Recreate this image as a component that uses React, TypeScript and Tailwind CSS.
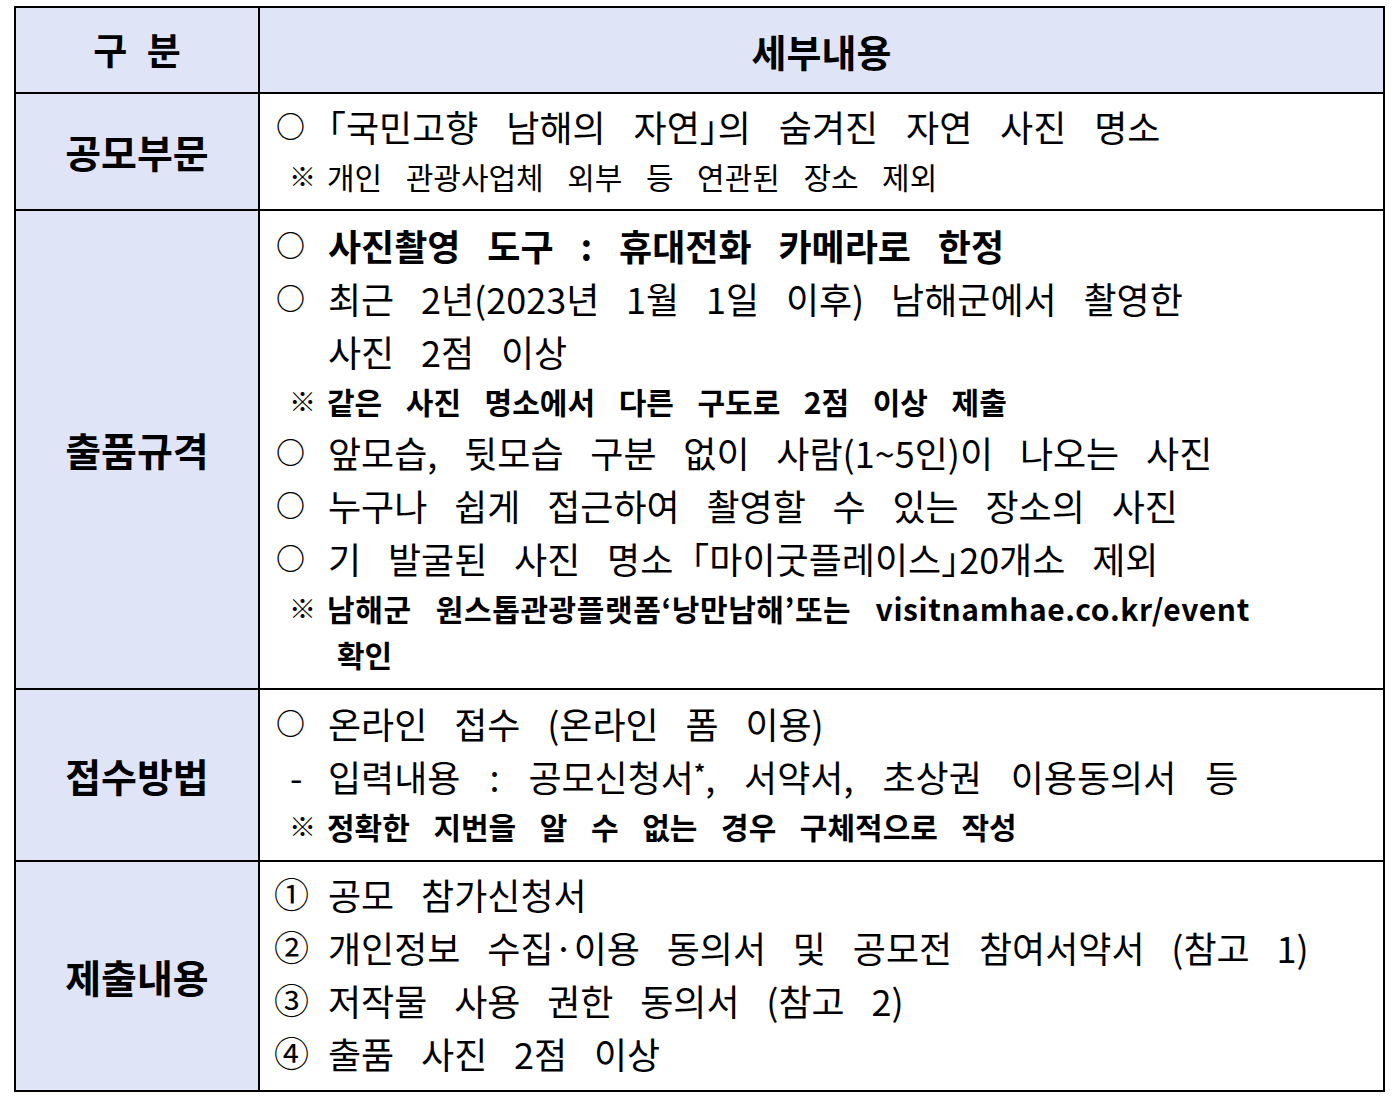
const FONT = { fontFamily: '"Noto Sans CJK KR", "Noto Sans", sans-serif' }

function Line({ mark, children, bold, className = '' }: { mark?: string; children: React.ReactNode; bold?: boolean; className?: string }) {
  return (
    <div className={`flex items-center h-[53px] text-[36px] text-black [word-spacing:0.52em] whitespace-nowrap ${bold ? 'font-bold' : ''} ${className}`}>
      {mark === '○' && <span className="w-[52px] shrink-0 text-left text-[29px] font-bold">○</span>}
      {mark && mark !== '○' && <span className="w-[54px] shrink-0 text-left text-[35px] ml-[-2px]">{mark}</span>}
      <span>{children}</span>
    </div>
  )
}

function Note({ children, bold, className = '' }: { children: React.ReactNode; bold?: boolean; className?: string }) {
  return (
    <div className={`flex items-center h-[48px] pl-[13px] text-[30px] text-black [word-spacing:0.56em] whitespace-nowrap ${bold ? 'font-bold' : ''} ${className}`}>
      <span className="w-[38px] shrink-0 text-[27px]">※</span>
      <span>{children}</span>
    </div>
  )
}

export default function App() {
  return (
    <div className="w-[1398px] h-[1096px] bg-white pt-[6px] pl-[14px]" style={FONT}>
      <table className="border-collapse border-2 border-black w-[1371px] table-fixed">
        <colgroup>
          <col className="w-[244px]" />
          <col />
        </colgroup>
        <tbody>
          <tr className="h-[86px] bg-[#dfe5f6]">
            <td className="border-2 border-black text-center text-[37px] font-bold [word-spacing:0.3em]">구 분</td>
            <td className="border-2 border-black text-center text-[38px] font-bold">세부내용</td>
          </tr>
          <tr className="h-[117px]">
            <td className="border-2 border-black bg-[#dfe5f6] text-center text-[39px] font-bold">공모부문</td>
            <td className="border-2 border-black pl-[16px] align-top pt-[5px]">
              <Line mark="○" className="[word-spacing:0.55em]">｢국민고향 남해의 자연｣의 숨겨진 자연 사진 명소</Line>
              <Note>개인 관광사업체 외부 등 연관된 장소 제외</Note>
            </td>
          </tr>
          <tr className="h-[479px]">
            <td className="border-2 border-black bg-[#dfe5f6] text-center text-[39px] font-bold">출품규격</td>
            <td className="border-2 border-black pl-[16px] align-top pt-[7px]">
              <Line mark="○" bold>사진촬영 도구 : 휴대전화 카메라로 한정</Line>
              <Line mark="○">최근 2년(2023년 1월 1일 이후) 남해군에서 촬영한</Line>
              <Line className="pl-[52px]">사진 2점 이상</Line>
              <Note bold>같은 사진 명소에서 다른 구도로 2점 이상 제출</Note>
              <Line mark="○">앞모습, 뒷모습 구분 없이 사람(1~5인)이 나오는 사진</Line>
              <Line mark="○">누구나 쉽게 접근하여 촬영할 수 있는 장소의 사진</Line>
              <Line mark="○">기 발굴된 사진 명소「마이굿플레이스｣20개소 제외</Line>
              <Note bold className="tracking-[0.02em] [word-spacing:0.45em]">남해군 원스톱관광플랫폼‘낭만남해’또는 visitnamhae.co.kr/event</Note>
              <div className="h-[44px] flex items-center pl-[61px] text-[30px] font-bold">확인</div>
            </td>
          </tr>
          <tr className="h-[172px]">
            <td className="border-2 border-black bg-[#dfe5f6] text-center text-[39px] font-bold">접수방법</td>
            <td className="border-2 border-black pl-[16px] align-top pt-[6px]">
              <Line mark="○">온라인 접수 (온라인 폼 이용)</Line>
              <div className="flex items-center h-[53px] text-[36px] [word-spacing:0.58em] pl-[14px] whitespace-nowrap">
                <span className="w-[38px] shrink-0">-</span>
                <span>입력내용 : 공모신청서<sup className="text-[22px] font-bold">*</sup>, 서약서, 초상권 이용동의서 등</span>
              </div>
              <Note bold>정확한 지번을 알 수 없는 경우 구체적으로 작성</Note>
            </td>
          </tr>
          <tr className="h-[230px]">
            <td className="border-2 border-black bg-[#dfe5f6] text-center text-[39px] font-bold">제출내용</td>
            <td className="border-2 border-black pl-[16px] align-top pt-[5px]">
              <Line mark="①">공모 참가신청서</Line>
              <Line mark="②">개인정보 수집·이용 동의서 및 공모전 참여서약서 (참고 1)</Line>
              <Line mark="③">저작물 사용 권한 동의서 (참고 2)</Line>
              <Line mark="④">출품 사진 2점 이상</Line>
            </td>
          </tr>
        </tbody>
      </table>
    </div>
  )
}
